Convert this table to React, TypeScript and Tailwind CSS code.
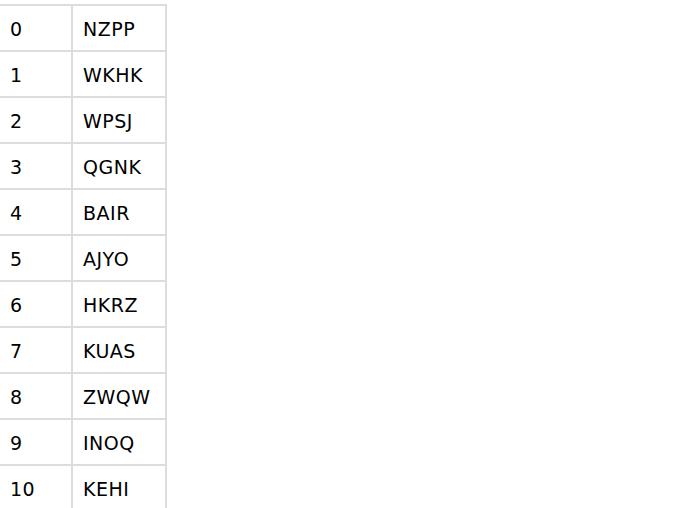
const rows = ['NZPP', 'WKHK', 'WPSJ', 'QGNK', 'BAIR', 'AJYO', 'HKRZ', 'KUAS', 'ZWQW', 'INOQ', 'KEHI'];

export default function App() {
  return (
    <div className="w-[700px] h-[508px] overflow-hidden bg-white pt-1" style={{ fontFamily: 'Verdana, "DejaVu Sans", sans-serif' }}>
      <div className="grid w-fit grid-cols-[71px_92px] gap-[2px] bg-[#dddddd] pt-[2px] pr-[2px] text-[19px] leading-6 tracking-[0.5px] text-black">
        {rows.map((code, i) => (
          <div key={i} className="contents">
            <div className="bg-white px-[10px] pt-[11px] pb-[9px]">{i}</div>
            <div className="bg-white px-[10px] pt-[11px] pb-[9px]">{code}</div>
          </div>
        ))}
      </div>
    </div>
  );
}
